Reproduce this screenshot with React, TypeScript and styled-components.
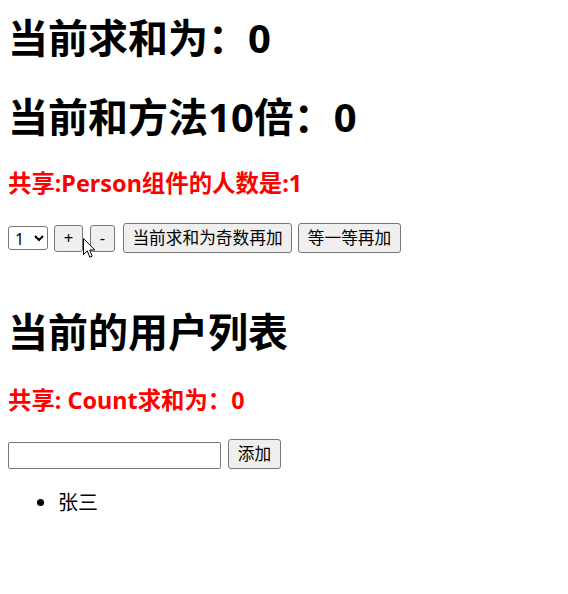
import React, { useState } from "react";
import styled, { createGlobalStyle } from "styled-components";

const GlobalStyle = createGlobalStyle`
  body {
    margin: 0;
    background: #ffffff;
    color: #000000;
    font-family: "Noto Sans", "Noto Sans CJK SC", sans-serif;
  }
`;

const Page = styled.div`
  position: relative;
  padding: 12px 8px 40px;
`;

const Title = styled.h1<{ $top?: number }>`
  margin: ${(p) => p.$top ?? 0}px 0 0;
  font-size: 40px;
  line-height: 52px;
  font-weight: 700;
  white-space: nowrap;
`;

const Shared = styled.h3<{ $top: number }>`
  margin: ${(p) => p.$top}px 0 0;
  font-size: 23.4px;
  line-height: 31px;
  font-weight: 700;
  color: #ff0000;
  white-space: nowrap;
`;

const Controls = styled.div<{ $top: number }>`
  display: flex;
  align-items: center;
  gap: 6px;
  height: 30px;
  margin-top: ${(p) => p.$top}px;
`;

const Select = styled.select`
  box-sizing: border-box;
  width: 40px;
  height: 24px;
  padding: 0 2px;
  font-family: "Noto Sans", sans-serif;
  font-size: 16px;
  border: 1px solid #767676;
  border-radius: 3px;
  background: #ffffff;
  color: #000000;
`;

const Button = styled.button<{ $w: number; $h: number }>`
  box-sizing: border-box;
  width: ${(p) => p.$w}px;
  height: ${(p) => p.$h}px;
  padding: 0;
  font-family: "Noto Sans", "Noto Sans CJK SC", sans-serif;
  font-size: 16.7px;
  line-height: 1;
  color: #000000;
  background: #efefef;
  border: 1px solid #767676;
  border-radius: 3px;
`;

const Input = styled.input`
  box-sizing: border-box;
  width: 213px;
  height: 27px;
  margin-top: 3px;
  border: 1px solid #767676;
  border-radius: 2px;
  padding: 1px 3px;
  font-size: 16px;
`;

const List = styled.ul`
  margin: 21px 0 0;
  padding-left: 50px;
  font-size: 20px;
  line-height: 26px;
`;

const Pointer = styled.svg`
  position: absolute;
  left: 83px;
  top: 238px;
  pointer-events: none;
`;

export default function App() {
  const [count] = useState(0);
  const [persons] = useState(["张三"]);

  return (
    <Page>
      <GlobalStyle />
      <Title>当前求和为：{count}</Title>
      <Title $top={27}>当前和方法10倍：{count * 10}</Title>
      <Shared $top={25}>共享:Person组件的人数是:{persons.length}</Shared>
      <Controls $top={24}>
        <Select defaultValue="1">
          <option value="1">1</option>
          <option value="2">2</option>
          <option value="3">3</option>
        </Select>
        <Button $w={29} $h={27}>+</Button>
        <Button $w={25} $h={27} style={{ marginLeft: 1 }}>-</Button>
        <Button $w={169} $h={30} style={{ marginLeft: 2 }}>当前求和为奇数再加</Button>
        <Button $w={103} $h={30}>等一等再加</Button>
      </Controls>

      <Title $top={53}>当前的用户列表</Title>
      <Shared $top={27}>共享: Count求和为：{count}</Shared>
      <Controls $top={23}>
        <Input type="text" />
        <Button $w={53} $h={30} style={{ marginLeft: 1 }}>添加</Button>
      </Controls>
      <List>
        {persons.map((p) => (
          <li key={p}>{p}</li>
        ))}
      </List>

      <Pointer width="13" height="21" viewBox="0 0 13 21">
        <path
          d="M0.5 0.5 L0.5 16.5 L4.3 12.9 L6.8 19.2 L9.2 18.2 L6.7 12 L11.8 12 Z"
          fill="#ffffff"
          stroke="#000000"
          strokeWidth="1"
          strokeLinejoin="round"
        />
      </Pointer>
    </Page>
  );
}
